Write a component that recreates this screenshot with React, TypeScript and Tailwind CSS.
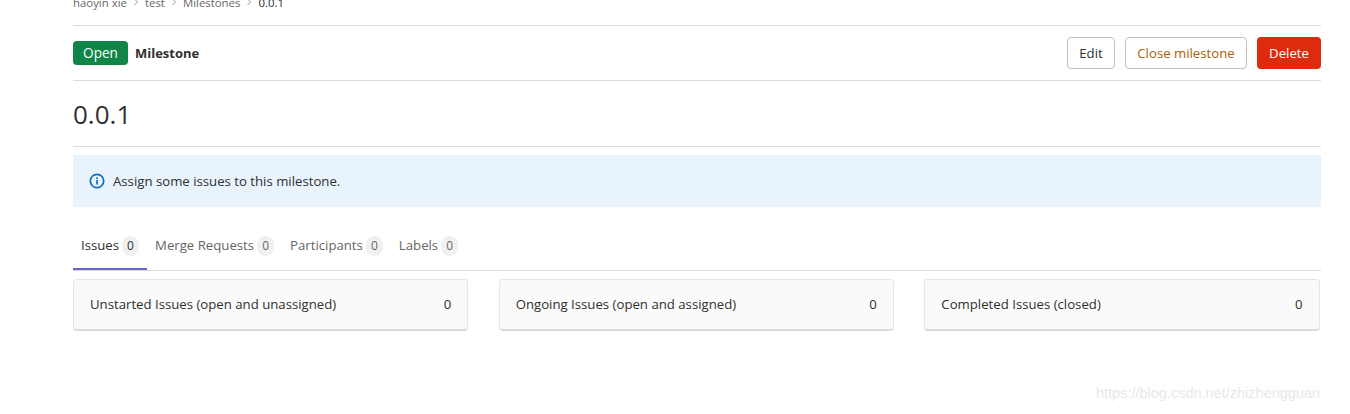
import React from "react";

const font = { fontFamily: '"Open Sans", "Noto Sans", sans-serif' };

function Chevron() {
  return (
    <svg width="6" height="8" viewBox="0 0 6 8" fill="none" className="mx-[6px] mt-[-3px]">
      <path d="M1.5 1 L4.5 4 L1.5 7" stroke="#9a9a9a" strokeWidth="1" />
    </svg>
  );
}

function Tab({ label, active }: { label: string; active?: boolean }) {
  return (
    <div
      className={`flex h-[47px] items-center gap-[3px] px-2 border-b-2 ${
        active ? "border-[#6666c4] text-[#303030]" : "border-transparent text-[#666666]"
      }`}
    >
      <span className="pt-px">{label}</span>
      <span className="mt-px flex h-[20px] min-w-[17px] items-center justify-center rounded-full bg-[#f0f0f0] px-[4px] text-[12px] leading-none">
        0
      </span>
    </div>
  );
}

function Card({ label }: { label: string }) {
  return (
    <div className="flex h-[52px] flex-1 items-center justify-between rounded-[4px] border border-[#e5e5e5] border-b-2 border-b-[#dbdbdb] bg-[#fafafa] pl-4 pr-4 text-[13.2px] text-[#303030]">
      <span className="pt-px">{label}</span>
      <span className="pt-px">0</span>
    </div>
  );
}

export default function App() {
  return (
    <div className="relative h-[414px] w-[1350px] overflow-hidden bg-white text-[13.2px]" style={font}>
      <div className="ml-[73px] w-[1248px]">
        <div className="flex h-[26px] items-start border-b border-[#dbdbdb] text-[11.4px] leading-none text-[#666666]">
          <div className="mt-[-5px] flex h-[16px] items-center">
            <span>haoyin xie</span>
            <Chevron />
            <span>test</span>
            <Chevron />
            <span>Milestones</span>
            <Chevron />
            <span className="text-[#1f1f1f]">0.0.1</span>
          </div>
        </div>

        <div className="flex h-[55px] items-center justify-between border-b border-[#dbdbdb]">
          <div className="flex items-center gap-[7px]">
            <span className="flex h-[24px] w-[55px] items-center justify-center rounded-[4px] bg-[#108548] text-[13.6px] text-white">
              Open
            </span>
            <span className="pt-px text-[13px] font-bold text-[#303030]">Milestone</span>
          </div>
          <div className="flex items-center gap-[10px] text-[13.2px]">
            <button className="flex h-[32px] w-[48px] items-center justify-center rounded-[4px] border border-[#bfbfbf] bg-white pt-px text-[#303030]">
              Edit
            </button>
            <button className="flex h-[32px] w-[122px] items-center justify-center rounded-[4px] border border-[#bfbfbf] bg-white pt-px text-[#ab6100]">
              Close milestone
            </button>
            <button className="flex h-[32px] w-[64px] items-center justify-center rounded-[4px] bg-[#dd2b0e] pt-px text-white">
              Delete
            </button>
          </div>
        </div>

        <div className="flex h-[66px] items-center border-b border-[#dbdbdb]">
          <h1 className="text-[26px] font-medium leading-none text-[#303030]">0.0.1</h1>
        </div>

        <div className="mt-[8px] flex h-[52px] items-center gap-[8px] bg-[#e9f3fc] pl-4 text-[#303030]">
          <svg width="16" height="16" viewBox="0 0 16 16" fill="none">
            <circle cx="8" cy="8" r="6.7" stroke="#0b6cc4" strokeWidth="1.7" />
            <rect x="7.2" y="7" width="1.7" height="4.5" fill="#0b6cc4" />
            <rect x="7.2" y="4.3" width="1.7" height="1.7" fill="#0b6cc4" />
          </svg>
          <span className="pt-px">Assign some issues to this milestone.</span>
        </div>

        <div className="mt-[16px] flex h-[48px] border-b border-[#dbdbdb]">
          <Tab label="Issues" active />
          <Tab label="Merge Requests" />
          <Tab label="Participants" />
          <Tab label="Labels" />
        </div>

        <div className="mt-[8px] flex gap-[30.5px] pr-[1.5px]">
          <Card label="Unstarted Issues (open and unassigned)" />
          <Card label="Ongoing Issues (open and assigned)" />
          <Card label="Completed Issues (closed)" />
        </div>
      </div>

      <div
        className="absolute left-[1096px] top-[386px] text-[14.5px] leading-none text-[#e8e8e8]"
        style={{ fontFamily: '"Liberation Sans", sans-serif' }}
      >
        https://blog.csdn.net/zhizhengguan
      </div>
    </div>
  );
}
